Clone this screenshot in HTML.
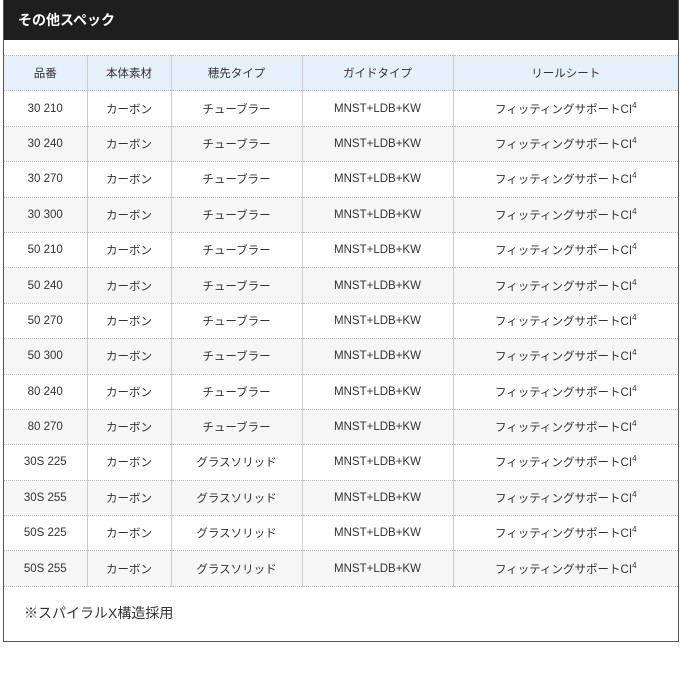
<!DOCTYPE html><html><head><meta charset="utf-8"><style>
body{margin:0;background:#fff;font-family:"Liberation Sans","Noto Sans CJK JP",sans-serif;}
.box{position:absolute;left:3px;top:0;width:674px;height:641px;border:1px solid #555;border-top:none;}
.hd{height:40px;background:#1e1e1e;color:#fff;font-weight:bold;font-size:14px;line-height:40px;padding-left:14px;}
table{position:absolute;left:0;top:55px;border-collapse:collapse;width:674px;font-size:11.5px;color:#333;table-layout:fixed}
td,th{height:35.4px;padding:0;text-align:center;border-left:1px solid #ccc;border-top:1px dotted #bbb;font-weight:normal;box-sizing:border-box}
tr>*:first-child{border-left:none}
th{background:#e6f0fb;}
tr:nth-child(odd) td{background:#f6f6f6}
tr:last-child td{border-bottom:1px dotted #bbb}
sup{font-size:8px;vertical-align:5px}
.note{position:absolute;left:20px;top:603px;font-size:14px;color:#333}
</style></head><body><div class="box"><div class="hd">その他スペック</div>
<table><colgroup><col style="width:83px"><col style="width:84px"><col style="width:131px"><col style="width:151px"><col></colgroup>
<tr><th>品番</th><th>本体素材</th><th>穂先タイプ</th><th>ガイドタイプ</th><th>リールシート</th></tr>
<tr><td>30 210</td><td>カーボン</td><td>チューブラー</td><td>MNST+LDB+KW</td><td>フィッティングサポートCI<sup>4</sup></td></tr>
<tr><td>30 240</td><td>カーボン</td><td>チューブラー</td><td>MNST+LDB+KW</td><td>フィッティングサポートCI<sup>4</sup></td></tr>
<tr><td>30 270</td><td>カーボン</td><td>チューブラー</td><td>MNST+LDB+KW</td><td>フィッティングサポートCI<sup>4</sup></td></tr>
<tr><td>30 300</td><td>カーボン</td><td>チューブラー</td><td>MNST+LDB+KW</td><td>フィッティングサポートCI<sup>4</sup></td></tr>
<tr><td>50 210</td><td>カーボン</td><td>チューブラー</td><td>MNST+LDB+KW</td><td>フィッティングサポートCI<sup>4</sup></td></tr>
<tr><td>50 240</td><td>カーボン</td><td>チューブラー</td><td>MNST+LDB+KW</td><td>フィッティングサポートCI<sup>4</sup></td></tr>
<tr><td>50 270</td><td>カーボン</td><td>チューブラー</td><td>MNST+LDB+KW</td><td>フィッティングサポートCI<sup>4</sup></td></tr>
<tr><td>50 300</td><td>カーボン</td><td>チューブラー</td><td>MNST+LDB+KW</td><td>フィッティングサポートCI<sup>4</sup></td></tr>
<tr><td>80 240</td><td>カーボン</td><td>チューブラー</td><td>MNST+LDB+KW</td><td>フィッティングサポートCI<sup>4</sup></td></tr>
<tr><td>80 270</td><td>カーボン</td><td>チューブラー</td><td>MNST+LDB+KW</td><td>フィッティングサポートCI<sup>4</sup></td></tr>
<tr><td>30S 225</td><td>カーボン</td><td>グラスソリッド</td><td>MNST+LDB+KW</td><td>フィッティングサポートCI<sup>4</sup></td></tr>
<tr><td>30S 255</td><td>カーボン</td><td>グラスソリッド</td><td>MNST+LDB+KW</td><td>フィッティングサポートCI<sup>4</sup></td></tr>
<tr><td>50S 225</td><td>カーボン</td><td>グラスソリッド</td><td>MNST+LDB+KW</td><td>フィッティングサポートCI<sup>4</sup></td></tr>
<tr><td>50S 255</td><td>カーボン</td><td>グラスソリッド</td><td>MNST+LDB+KW</td><td>フィッティングサポートCI<sup>4</sup></td></tr>
</table>
<div class="note">※スパイラルX構造採用</div></div></body></html>
